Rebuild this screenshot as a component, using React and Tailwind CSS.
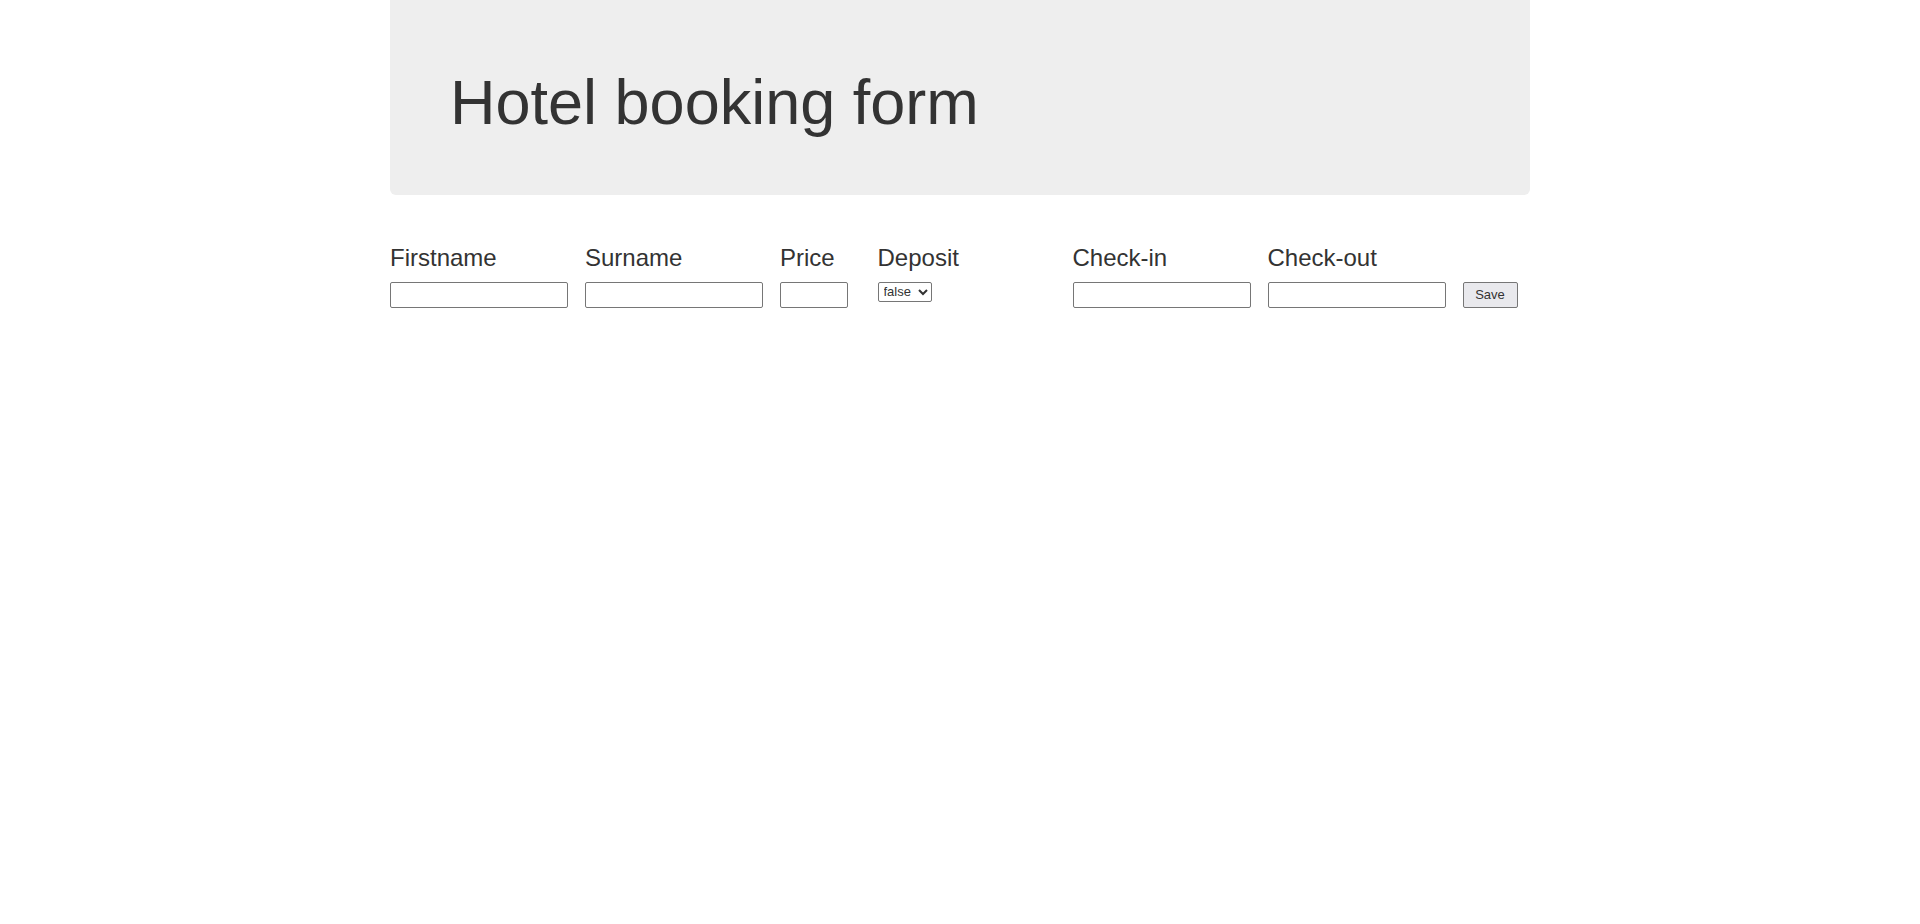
export default function App() {
  const font = { fontFamily: '"Liberation Sans", Arial, sans-serif' };
  const Label = ({ children }) => (
    <h3 className="mt-[20px] mb-[10px] text-[24px] leading-[26.4px] text-[#333] font-normal">{children}</h3>
  );
  const Input = ({ w }) => (
    <input
      type="text"
      className={`${w} h-[26px] border border-[#767676] rounded-[2px] bg-white px-[2px] text-[13px] outline-none block`}
    />
  );
  return (
    <div className="min-h-[924px] bg-white text-[#333]" style={font}>
      <div className="w-[1140px] mx-auto">
        <div className="bg-[#eeeeee] rounded-b-[6px] px-[60px] pt-[48px] pb-[48px] mb-[30px]">
          <h1 className="mt-[20px] mb-[10px] text-[63px] leading-[69.3px] font-normal text-[#333]">Hotel booking form</h1>
        </div>
        <div className="flex -mx-[15px]">
          <div className="w-[195px] px-[15px]">
            <Label>Firstname</Label>
            <Input w="w-[178px]" />
          </div>
          <div className="w-[195px] px-[15px]">
            <Label>Surname</Label>
            <Input w="w-[178px]" />
          </div>
          <div className="w-[97.5px] px-[15px]">
            <Label>Price</Label>
            <Input w="w-[68px]" />
          </div>
          <div className="w-[195px] px-[15px]">
            <Label>Deposit</Label>
            <select className="block w-[54px] h-[20px] border border-[#767676] rounded-[2px] bg-white text-[13px] leading-[15px] text-[#333] pl-[1px]">
              <option>false</option>
              <option>true</option>
            </select>
          </div>
          <div className="w-[195px] px-[15px]">
            <Label>Check-in</Label>
            <Input w="w-[178px]" />
          </div>
          <div className="w-[195px] px-[15px]">
            <Label>Check-out</Label>
            <Input w="w-[178px]" />
          </div>
          <div className="w-[97.5px] px-[15px]">
            <div className="h-[56.4px]" />
            <button className="block w-[55px] h-[26px] border border-[#767676] rounded-[2px] bg-[#e9e9ed] text-[13px] text-[#333]">Save</button>
          </div>
        </div>
      </div>
    </div>
  );
}
